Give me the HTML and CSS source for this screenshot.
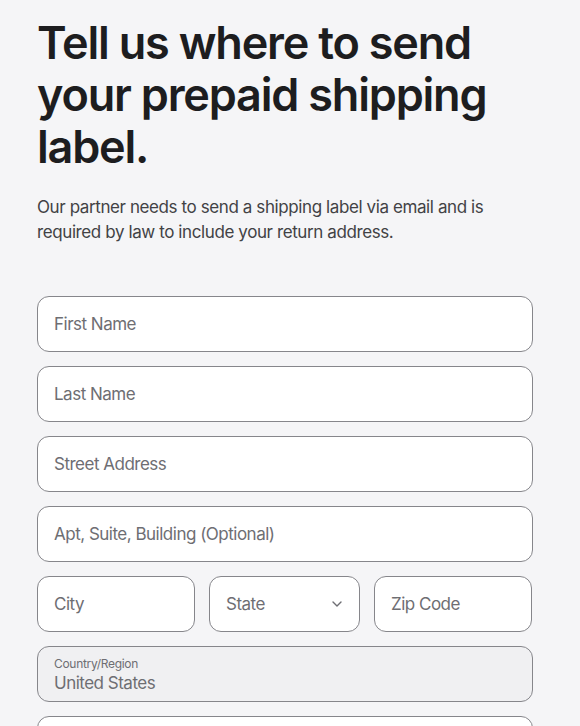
FILE: index.html
```html
<!DOCTYPE html>
<html lang="en">
<head>
<meta charset="utf-8">
<title>Shipping label</title>
<link rel="stylesheet" href="styles.css">
</head>
<body>
<main class="page">
  <h1 class="title">Tell us where to send your prepaid shipping label.</h1>
  <p class="intro">Our partner needs to send a shipping label via email and is required by law to include your return address.</p>
  <form class="form">
    <div class="field"><span class="placeholder">First Name</span></div>
    <div class="field"><span class="placeholder">Last Name</span></div>
    <div class="field"><span class="placeholder">Street Address</span></div>
    <div class="field"><span class="placeholder">Apt, Suite, Building (Optional)</span></div>
    <div class="row">
      <div class="field"><span class="placeholder">City</span></div>
      <div class="field select"><span class="placeholder">State</span>
        <svg class="chevron" width="12" height="8" viewBox="0 0 12 8"><path d="M2 2 L6 6 L10 2" fill="none" stroke="#6e6e73" stroke-width="1.4" stroke-linecap="round" stroke-linejoin="round"/></svg>
      </div>
      <div class="field"><span class="placeholder">Zip Code</span></div>
    </div>
    <div class="field disabled">
      <span class="label">Country/Region</span>
      <span class="value">United States</span>
    </div>
    <div class="field"></div>
  </form>
</main>
</body>
</html>
```
FILE: styles.css
```css
html, body {
  margin: 0;
  padding: 0;
  background: #f5f5f7;
}
body {
  font-family: Inter, "Noto Sans", sans-serif;
  color: #1d1d1f;
}
.page {
  padding: 17px 47px 0 37px;
}
.title {
  margin: 0;
  font-size: 45px;
  line-height: 52px;
  font-weight: 600;
  letter-spacing: -1.2px;
  color: #1d1d1f;
}
.intro {
  margin: 22px 0 0;
  font-size: 17px;
  line-height: 25px;
  letter-spacing: -0.4px;
  color: #424245;
}
.form {
  margin-top: 51px;
  display: flex;
  flex-direction: column;
  gap: 14px;
}
.field {
  box-sizing: border-box;
  height: 56px;
  border: 1px solid #86868b;
  border-radius: 12px;
  background: #fff;
  padding: 0 16px;
  display: flex;
  align-items: center;
  font-size: 17px;
  letter-spacing: -0.5px;
}
.placeholder {
  color: #6e6e73;
}
.row {
  display: grid;
  grid-template-columns: 158px 151px 158px;
  gap: 14px;
}
.select {
  justify-content: space-between;
  padding-right: 16px;
}
.chevron {
  display: block;
}
.disabled {
  background: #f0f0f2;
  flex-direction: column;
  align-items: flex-start;
  justify-content: center;
  padding-top: 2px;
}
.label {
  font-size: 12px;
  line-height: 15px;
  letter-spacing: -0.3px;
  color: #6e6e73;
}
.value {
  margin-top: 2px;
  font-size: 17px;
  line-height: 21px;
  color: #6e6e73;
}
```
